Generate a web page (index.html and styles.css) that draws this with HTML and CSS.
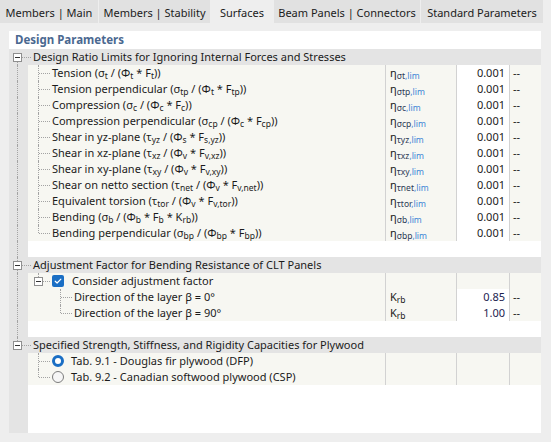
FILE: index.html
```html
<!DOCTYPE html>
<html lang="en">
<head>
    <meta charset="UTF-8">
    <meta name="viewport" content="width=device-width, initial-scale=1.0">
    <title>Design Parameters</title>
    <link rel="stylesheet" href="styles.css">
</head>
<body>
    <div class="tabs">
        <div class="tab tab-main">Members | Main</div>
        <div class="tab tab-stability">Members | Stability</div>
        <div class="tab tab-surfaces active">Surfaces</div>
        <div class="tab tab-beam">Beam Panels | Connectors</div>
        <div class="tab tab-standard">Standard Parameters</div>
    </div>

    <div class="panel">
        <div class="panel-title">Design Parameters</div>

        <!-- Design ratio limits -->
        <div class="row group">
            <span class="node root first"><i class="box"></i></span>
            <span class="name">Design Ratio Limits for Ignoring Internal Forces and Stresses</span>
        </div>
        <div class="row item">
            <div class="tree"><span class="ind root pipe"></span><span class="ind tee"></span><span class="label">Tension (σ<sub>t</sub> / (Φ<sub>t</sub> * F<sub>t</sub>))</span></div>
            <div class="sym">η<sub>σt<span class="lim">,lim</span></sub></div>
            <div class="val">0.001</div>
            <div class="unit">--</div>
        </div>
        <div class="row item">
            <div class="tree"><span class="ind root pipe"></span><span class="ind tee"></span><span class="label">Tension perpendicular (σ<sub>tp</sub> / (Φ<sub>t</sub> * F<sub>tp</sub>))</span></div>
            <div class="sym">η<sub>σtp<span class="lim">,lim</span></sub></div>
            <div class="val">0.001</div>
            <div class="unit">--</div>
        </div>
        <div class="row item">
            <div class="tree"><span class="ind root pipe"></span><span class="ind tee"></span><span class="label">Compression (σ<sub>c</sub> / (Φ<sub>c</sub> * F<sub>c</sub>))</span></div>
            <div class="sym">η<sub>σc<span class="lim">,lim</span></sub></div>
            <div class="val">0.001</div>
            <div class="unit">--</div>
        </div>
        <div class="row item">
            <div class="tree"><span class="ind root pipe"></span><span class="ind tee"></span><span class="label">Compression perpendicular (σ<sub>cp</sub> / (Φ<sub>c</sub> * F<sub>cp</sub>))</span></div>
            <div class="sym">η<sub>σcp<span class="lim">,lim</span></sub></div>
            <div class="val">0.001</div>
            <div class="unit">--</div>
        </div>
        <div class="row item">
            <div class="tree"><span class="ind root pipe"></span><span class="ind tee"></span><span class="label">Shear in yz-plane (τ<sub>yz</sub> / (Φ<sub>s</sub> * F<sub>s,yz</sub>))</span></div>
            <div class="sym">η<sub>τyz<span class="lim">,lim</span></sub></div>
            <div class="val">0.001</div>
            <div class="unit">--</div>
        </div>
        <div class="row item">
            <div class="tree"><span class="ind root pipe"></span><span class="ind tee"></span><span class="label">Shear in xz-plane (τ<sub>xz</sub> / (Φ<sub>v</sub> * F<sub>v,xz</sub>))</span></div>
            <div class="sym">η<sub>τxz<span class="lim">,lim</span></sub></div>
            <div class="val">0.001</div>
            <div class="unit">--</div>
        </div>
        <div class="row item">
            <div class="tree"><span class="ind root pipe"></span><span class="ind tee"></span><span class="label">Shear in xy-plane (τ<sub>xy</sub> / (Φ<sub>v</sub> * F<sub>v,xy</sub>))</span></div>
            <div class="sym">η<sub>τxy<span class="lim">,lim</span></sub></div>
            <div class="val">0.001</div>
            <div class="unit">--</div>
        </div>
        <div class="row item">
            <div class="tree"><span class="ind root pipe"></span><span class="ind tee"></span><span class="label">Shear on netto section (τ<sub>net</sub> / (Φ<sub>v</sub> * F<sub>v,net</sub>))</span></div>
            <div class="sym">η<sub>τnet<span class="lim">,lim</span></sub></div>
            <div class="val">0.001</div>
            <div class="unit">--</div>
        </div>
        <div class="row item">
            <div class="tree"><span class="ind root pipe"></span><span class="ind tee"></span><span class="label">Equivalent torsion (τ<sub>tor</sub> / (Φ<sub>v</sub> * F<sub>v,tor</sub>))</span></div>
            <div class="sym">η<sub>τtor<span class="lim">,lim</span></sub></div>
            <div class="val">0.001</div>
            <div class="unit">--</div>
        </div>
        <div class="row item">
            <div class="tree"><span class="ind root pipe"></span><span class="ind tee"></span><span class="label">Bending (σ<sub>b</sub> / (Φ<sub>b</sub> * F<sub>b</sub> * K<sub>rb</sub>))</span></div>
            <div class="sym">η<sub>σb<span class="lim">,lim</span></sub></div>
            <div class="val">0.001</div>
            <div class="unit">--</div>
        </div>
        <div class="row item">
            <div class="tree"><span class="ind root pipe"></span><span class="ind end"></span><span class="label">Bending perpendicular (σ<sub>bp</sub> / (Φ<sub>bp</sub> * F<sub>bp</sub>))</span></div>
            <div class="sym">η<sub>σbp<span class="lim">,lim</span></sub></div>
            <div class="val">0.001</div>
            <div class="unit">--</div>
        </div>
        <div class="row space">
            <div class="tree"><span class="ind root pipe"></span></div>
        </div>

        <!-- CLT adjustment factor -->
        <div class="row group">
            <span class="node root mid"><i class="box"></i></span>
            <span class="name">Adjustment Factor for Bending Resistance of CLT Panels</span>
        </div>
        <div class="row item">
            <div class="tree">
                <span class="ind root pipe"></span><span class="node last"><i class="box"></i></span>
                <span class="check"><svg width="12" height="12" viewBox="0 0 12 12"><path d="M3.2 6.2 L5.1 8 L8.9 4.1" fill="none" stroke="#fff" stroke-width="1.2" stroke-linecap="round" stroke-linejoin="round"/></svg></span>
                <span class="label option">Consider adjustment factor</span>
            </div>
            <div class="sym"></div>
            <div class="val empty"></div>
            <div class="unit"></div>
        </div>
        <div class="row item">
            <div class="tree"><span class="ind root pipe"></span><span class="ind"></span><span class="ind tee"></span><span class="label">Direction of the layer β = 0°</span></div>
            <div class="sym">K<sub class="plain">rb</sub></div>
            <div class="val num">0.85</div>
            <div class="unit">--</div>
        </div>
        <div class="row item">
            <div class="tree"><span class="ind root pipe"></span><span class="ind"></span><span class="ind end"></span><span class="label">Direction of the layer β = 90°</span></div>
            <div class="sym">K<sub class="plain">rb</sub></div>
            <div class="val num">1.00</div>
            <div class="unit">--</div>
        </div>
        <div class="row space">
            <div class="tree"><span class="ind root pipe"></span></div>
        </div>

        <!-- Plywood capacities -->
        <div class="row group">
            <span class="node root last"><i class="box"></i></span>
            <span class="name">Specified Strength, Stiffness, and Rigidity Capacities for Plywood</span>
        </div>
        <div class="row item">
            <div class="tree"><span class="ind root"></span><span class="ind tee"></span><span class="radio checked"></span><span class="label option">Tab. 9.1 - Douglas fir plywood (DFP)</span></div>
            <div class="sym"></div>
            <div class="val empty"></div>
            <div class="unit"></div>
        </div>
        <div class="row item">
            <div class="tree"><span class="ind root"></span><span class="ind end"></span><span class="radio"></span><span class="label option">Tab. 9.2 - Canadian softwood plywood (CSP)</span></div>
            <div class="sym"></div>
            <div class="val empty"></div>
            <div class="unit"></div>
        </div>

        <div class="filler"></div>
    </div>
</body>
</html>
```

FILE: styles.css
```css
body {
    margin: 0;
    width: 551px;
    height: 442px;
    overflow: hidden;
    background-color: #eeeeee;
    font-family: "Noto Sans", "DejaVu Sans", sans-serif;
    font-size: 11px;
    color: #1b1b1b;
}

/* tab strip */
.tabs {
    display: flex;
    gap: 1px;
    height: 23px;
}
.tab {
    background-color: #e1e1e1;
    text-align: center;
    line-height: 25px;
    white-space: nowrap;
}
.tab.active {
    background-color: #eeeeee;
}
.tab-main { width: 98px; }
.tab-stability { width: 111px; }
.tab-surfaces { width: 62px; }
.tab-beam { width: 146px; }
.tab-standard { width: 122px; }

/* white sheet with the tree table */
.panel {
    margin: 8px 0 0 9px;
    width: 532px;
    height: 402px;
    background-color: white;
    display: flex;
    flex-direction: column;
}
.panel-title {
    height: 18px;
    line-height: 18px;
    padding-left: 6px;
    font-size: 11.5px;
    font-weight: 700;
    color: #4a6890;
}

.row {
    display: flex;
    height: 16px;
    line-height: 16px;
    flex-shrink: 0;
}
.row.group {
    background-color: #e4e4e4;
}
.row.group .name {
    padding-left: 2px;
    white-space: nowrap;
}
.tree {
    width: 376px;
    display: flex;
    align-items: center;
    white-space: nowrap;
    background: linear-gradient(to right, #e4e4e4 19px, #f7f7f2 19px);
}
.row.space .tree {
    width: 100%;
    background: linear-gradient(to right, #e4e4e4 19px, white 19px);
}
.label {
    padding-left: 2px;
}
.label.option {
    padding-left: 8px;
}

.sym, .val, .unit {
    box-sizing: border-box;
    border-left: 1px solid #d2d2d2;
    background-color: #f7f7f2;
    white-space: nowrap;
}
.sym {
    width: 71px;
    padding-left: 4px;
}
.val {
    width: 53px;
    padding-right: 4px;
    text-align: right;
    background-color: white;
}
.val.empty {
    background-color: #f7f7f2;
}
.val.num {
    color: #1c2350;
}
.unit {
    flex: 1;
    padding-left: 3px;
}
.filler {
    flex: 1;
    background: linear-gradient(to right, #e4e4e4 19px, white 19px);
}

sub {
    font-size: 8.5px;
    line-height: 0;
    vertical-align: -2px;
}
.sym sub {
    color: #2c3a55;
}
.sym sub.plain {
    color: #1b1b1b;
}
.lim {
    color: #3d86d6;
}

/* dotted tree connectors */
.ind, .node {
    position: relative;
    width: 22px;
    height: 16px;
    flex-shrink: 0;
}
.ind.root {
    width: 19px;
}
.ind.pipe::before,
.ind.tee::before,
.ind.end::before,
.node::before {
    content: "";
    position: absolute;
    left: 10px;
    top: 0;
    bottom: 0;
    border-left: 1px dotted #a3a3a3;
}
.ind.root::before,
.node.root::before {
    left: 8px;
}
.ind.end::before,
.node.last::before {
    bottom: 8px;
}
.node.first::before {
    top: 8px;
}
.ind.tee::after,
.ind.end::after,
.node::after {
    content: "";
    position: absolute;
    left: 11px;
    right: 0;
    top: 8px;
    border-top: 1px dotted #a3a3a3;
}
.node::after {
    left: 15px;
}
.node.root::after {
    left: 13px;
}

/* expand / collapse box */
.box {
    position: absolute;
    left: 6px;
    top: 4px;
    width: 9px;
    height: 9px;
    box-sizing: border-box;
    border: 1px solid #8f8f8f;
    background-color: white;
    z-index: 1;
}
.node.root .box {
    left: 4px;
}
.box::after {
    content: "";
    position: absolute;
    left: 1px;
    right: 1px;
    top: 3px;
    height: 1px;
    background-color: #333;
}

.check {
    width: 12px;
    height: 12px;
    margin-left: 2px;
    border-radius: 2px;
    background-color: #1a6ec4;
    display: flex;
}
.radio {
    width: 12px;
    height: 12px;
    margin-left: 2px;
    margin-right: -1px;
    box-sizing: border-box;
    border-radius: 50%;
    border: 1px solid #7c7c7c;
    background-color: #f6f6f6;
}
.radio.checked {
    border: 3.5px solid #1a6ec4;
    background-color: white;
}
```
